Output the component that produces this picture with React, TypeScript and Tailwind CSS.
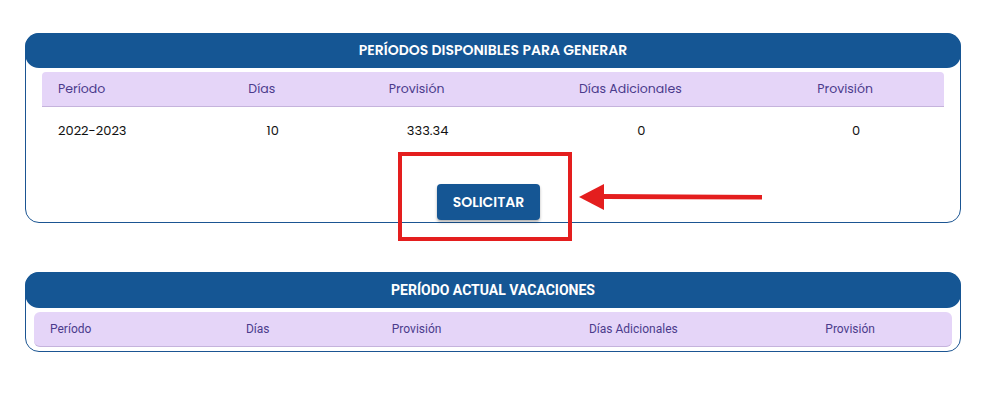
import React from 'react';

const poppins = "font-['Poppins','Noto_Sans',sans-serif]";
const roboto = "font-['Roboto',sans-serif]";

const cols1 = ['w-[163px]', 'w-[114px]', 'w-[196px]', 'w-[232px]', 'w-[198px]'];
const cols2 = ['w-[167px]', 'w-[114px]', 'w-[204px]', 'w-[230px]', 'w-[204px]'];
const headers = ['Período', 'Días', 'Provisión', 'Días Adicionales', 'Provisión'];
const row = ['2022-2023', '10', '333.34', '0', '0'];

const App: React.FC = () => {
	return (
		<div className="relative min-h-screen w-full bg-white pt-[33px]">
			{/* períodos disponibles */}
			<section className={`ml-[25px] w-[936px] h-[190px] border border-[#1b5592] rounded-[14px] ${poppins}`}>
				<div className="-mx-px -mt-px h-[35px] rounded-[14px] bg-[#155694] flex items-center justify-center">
					<h2 className="text-white text-[14px] font-semibold">
						PERÍODOS DISPONIBLES PARA GENERAR
					</h2>
				</div>
				<div className="mx-[16px] mt-[4px] h-[35px] flex items-center bg-[#e5d5f8] border-b border-[#c5b3dc] rounded-t-[4px] text-[12.5px] text-[#4b3b8c]">
					{headers.map((h, i) => (
						<div key={i} className={`${cols1[i]} ${i === 0 ? 'pl-[16px]' : 'text-center'}`}>
							{h}
						</div>
					))}
				</div>
				<div className="mx-[16px] h-[48px] flex items-center text-[13px] text-[#111]">
					{row.map((c, i) => (
						<div key={i} className={`${cols1[i]} ${i === 0 ? 'pl-[16px]' : 'text-center pl-[22px]'}`}>
							{c}
						</div>
					))}
				</div>
				<div className="mt-[29px] flex justify-center">
					<button className="mr-[9px] w-[103px] h-[36px] rounded-[4px] bg-[#155694] text-white text-[14px] font-semibold shadow-[0_2px_3px_rgba(0,0,0,0.3)]">
						SOLICITAR
					</button>
				</div>
			</section>

			{/* período actual */}
			<section className={`ml-[25px] mt-[49px] w-[936px] h-[80px] border border-[#1b5592] rounded-[14px] ${roboto}`}>
				<div className="-mx-px -mt-px h-[36px] rounded-[14px] bg-[#155694] flex items-center justify-center">
					<h2 className="text-white text-[14px] font-bold">PERÍODO ACTUAL VACACIONES</h2>
				</div>
				<div className="mx-[8px] mt-[4px] h-[35px] flex items-center bg-[#e5d5f8] border-b border-[#c5b3dc] rounded-[6px] text-[12px] text-[#4b3b8c]">
					{headers.map((h, i) => (
						<div key={i} className={`${cols2[i]} ${i === 0 ? 'pl-[16px]' : 'text-center'}`}>
							{h}
						</div>
					))}
				</div>
			</section>

			{/* annotation */}
			<div className="absolute left-[398px] top-[152px] w-[174px] h-[89px] border-4 border-[#e41e1e]" />
			<svg className="absolute left-[578px] top-[182px]" width="188" height="30" viewBox="0 0 188 30">
				<polygon points="1,15 26,2 26,28" fill="#e41e1e" />
				<polygon points="25,12 184,13 184,17.5 25,17" fill="#e41e1e" />
			</svg>
		</div>
	);
};

export default App;
